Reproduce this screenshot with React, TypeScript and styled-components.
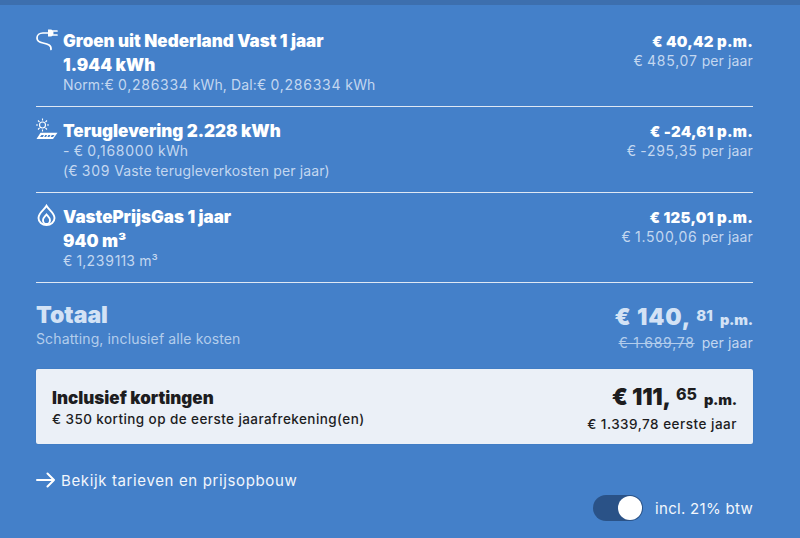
import React from "react";
import styled, { createGlobalStyle } from "styled-components";

const Global = createGlobalStyle`
  html, body { margin: 0; padding: 0; background: #4480c9; }
  body { font-family: Inter, "Liberation Sans", sans-serif; }
`;

const Page = styled.div`
  width: 800px;
  height: 538px;
  box-sizing: border-box;
  overflow: hidden;
  background: #4480c9;
  border-top: 5px solid #3d6fae;
  padding: 25px 47px 0 36px;
  color: #fff;
`;

const Row = styled.section<{ $height: number; $top: number }>`
  height: ${(p) => p.$height}px;
  padding-top: ${(p) => p.$top}px;
  box-sizing: border-box;
  display: flex;
  justify-content: space-between;
  border-bottom: 1px solid #dfe8f4;
`;

const Left = styled.div`
  display: flex;
  gap: 5px;
`;

const IconSlot = styled.div`
  width: 22px;
  flex: none;
  margin-top: -2px;
  svg { display: block; }
`;

const Title = styled.div`
  font-size: 17px;
  line-height: 23px;
  font-weight: 900;
  & + & { margin-top: 1px; }
`;

const Sub = styled.div`
  font-size: 14px;
  line-height: 20px;
  color: #c3d7f0;
  letter-spacing: 0.13px;
  ${Title} + & { margin-top: -2px; }
`;

const Num = styled.span`
  letter-spacing: 0.75px;
`;

const Right = styled.div`
  text-align: right;
`;

const Price = styled.div`
  font-size: 15px;
  line-height: 23px;
  font-weight: 900;
  letter-spacing: 0.25px;
`;

const Yearly = styled(Sub)`
  margin-top: -2px;
`;

const Total = styled.section`
  height: 86px;
  display: flex;
  justify-content: space-between;
  color: #d3e2f5;
  padding-top: 16px;
  box-sizing: border-box;
`;

const TotalTitle = styled.div`
  font-size: 23px;
  line-height: 32px;
  font-weight: 900;
`;

const TotalSub = styled(Sub)`
  margin-top: -2px;
  color: #b3cdec;
`;

const BigPrice = styled.div<{ $dark?: boolean }>`
  display: flex;
  align-items: baseline;
  justify-content: flex-end;
  font-weight: 900;
  font-size: 23px;
  line-height: 32px;
  letter-spacing: ${(p) => (p.$dark ? -0.2 : 0.9)}px;
  margin-top: ${(p) => (p.$dark ? -6 : 2)}px;
  color: ${(p) => (p.$dark ? "#1d1d1f" : "#d3e2f5")};
`;

const Cents = styled.span<{ $dark?: boolean }>`
  font-size: ${(p) => (p.$dark ? 16 : 15)}px;
  font-weight: 800;
  letter-spacing: 0;
  position: relative;
  top: ${(p) => (p.$dark ? -5 : -4)}px;
  margin: 0 7px 0 5px;
`;

const Unit = styled.span`
  font-size: 14.5px;
  font-weight: 900;
  letter-spacing: -0.2px;
`;

const Struck = styled.span`
  text-decoration: line-through;
  color: #b3cdec;
  margin-right: 7px;
`;

const TotalYear = styled(Sub)`
  margin-top: -3px;
`;

const Discount = styled.section`
  height: 75px;
  box-sizing: border-box;
  background: #ebf0f7;
  color: #1d1d1f;
  border-radius: 2px;
  padding: 18px 16px 0;
  display: flex;
  justify-content: space-between;
  box-shadow: 0 0 1px #2f63a5;
`;

const DiscountTitle = styled.div`
  font-size: 17px;
  line-height: 23px;
  font-weight: 900;
`;

const DiscountSub = styled.div`
  font-size: 13.5px;
  line-height: 18px;
  font-weight: 500;
  letter-spacing: 0.42px;
`;

const DiscountYear = styled(DiscountSub)`
  text-align: right;
  margin-top: -1px;
  letter-spacing: 0.5px;
`;

const LinkRow = styled.a`
  display: flex;
  align-items: center;
  gap: 6px;
  margin-top: 25px;
  height: 22px;
  font-size: 15px;
  letter-spacing: 0.63px;
  color: #f2f6fc;
`;

const ToggleRow = styled.div`
  display: flex;
  justify-content: flex-end;
  align-items: center;
  gap: 12px;
  margin-top: 4px;
  font-size: 15px;
  letter-spacing: 0.3px;
  color: #f2f6fc;
`;

const Track = styled.div`
  width: 50px;
  height: 26px;
  border-radius: 13px;
  background: #2a5287;
  display: flex;
  justify-content: flex-end;
  align-items: center;
  padding: 0 1px;
  box-sizing: border-box;
`;

const Knob = styled.div`
  width: 24px;
  height: 24px;
  border-radius: 50%;
  background: #fff;
`;

const Plug = () => (
  <svg width="22" height="24" viewBox="0 0 22 24" fill="none" stroke="#fff" strokeWidth="1.700" strokeLinecap="round">
    <path d="M15 21.500C15.500 17 12 16 7 15C3 14.300 1 13 1 10C1 7 3.500 5 7 5H12" />
    <path d="M12 1.500H14.500C16.500 1.500 17.500 3 17.500 5C17.500 7 16.500 8.500 14.500 8.500H12Z" fill="#fff" stroke="none" />
    <path d="M17 3H21M17 7H21" />
  </svg>
);

const Solar = () => (
  <svg width="22" height="24" viewBox="0 0 22 24" fill="none" stroke="#fff" strokeWidth="1.100">
    <circle cx="6.500" cy="7" r="3" />
    <path d="M6.500 0.500V2.500M6.500 11.500V13.500M0 7H2M11 7H13M2 2.500L3.500 4M9.500 10L11 11.500M11 2.500L9.500 4M3.500 10L2 11.500" />
    <path d="M4.500 14.800H21.500L17 21H0.500Z" fill="#fff" stroke="none" />
    <path d="M5.500 17H18.500L17 19H4Z" fill="#4480c9" stroke="none" />
    <path d="M8.800 16.500L7.300 19.500M12 16.500L10.500 19.500M15.300 16.500L13.800 19.500" stroke="#fff" strokeWidth="1.200" />
  </svg>
);

const Flame = () => (
  <svg width="22" height="24" viewBox="0 0 22 24" fill="none" stroke="#fff" strokeWidth="1.900">
    <path d="M10.500 1.800C12.800 6 18.500 8.800 18.500 14C18.500 18 15 21 10.500 21C6 21 2.500 18 2.500 14C2.500 8.800 8.200 6 10.500 1.800Z" />
    <path d="M10.500 10.500C11.800 12.300 14 13.800 14 16.200C14 18.300 12.500 20 10.500 20C8.500 20 7 18.300 7 16.200C7 13.800 9.200 12.300 10.500 10.500Z" />
  </svg>
);

const Arrow = () => (
  <svg width="19" height="16" viewBox="0 0 19 16" fill="none" stroke="#fff" strokeWidth="2" strokeLinecap="round" strokeLinejoin="round">
    <path d="M1 8H18M11.500 1.500L18 8L11.500 14.500" />
  </svg>
);

export default function App() {
  return (
    <Page>
      <Global />
      <Row $height={77} $top={0}>
        <Left>
          <IconSlot><Plug /></IconSlot>
          <div>
            <Title>Groen uit Nederland Vast 1 jaar</Title>
            <Title>1.944 kWh</Title>
            <Sub>Norm:€ <Num>0,286334</Num> kWh, Dal:€ <Num>0,286334</Num> kWh</Sub>
          </div>
        </Left>
        <Right>
          <Price>€ 40,42 p.m.</Price>
          <Yearly>€ <Num>485,07</Num> per jaar</Yearly>
        </Right>
      </Row>
      <Row $height={86} $top={13}>
        <Left>
          <IconSlot><Solar /></IconSlot>
          <div>
            <Title>Teruglevering 2.228 kWh</Title>
            <Sub>- € <Num>0,168000</Num> kWh</Sub>
            <Sub>(€ <Num>309</Num> Vaste terugleverkosten per jaar)</Sub>
          </div>
        </Left>
        <Right>
          <Price>€ -24,61 p.m.</Price>
          <Yearly>€ -<Num>295,35</Num> per jaar</Yearly>
        </Right>
      </Row>
      <Row $height={90} $top={13}>
        <Left>
          <IconSlot><Flame /></IconSlot>
          <div>
            <Title>VastePrijsGas 1 jaar</Title>
            <Title>940 m³</Title>
            <Sub>€ 1,<Num>239</Num>113 m³</Sub>
          </div>
        </Left>
        <Right>
          <Price>€ 125,01 p.m.</Price>
          <Yearly>€ <Num>1.500,06</Num> per jaar</Yearly>
        </Right>
      </Row>
      <Total>
        <div>
          <TotalTitle>Totaal</TotalTitle>
          <TotalSub>Schatting, inclusief alle kosten</TotalSub>
        </div>
        <Right>
          <BigPrice>€ 140,<Cents>81</Cents><Unit>p.m.</Unit></BigPrice>
          <TotalYear><Struck><Num>€ 1.689,78</Num></Struck>per jaar</TotalYear>
        </Right>
      </Total>
      <Discount>
        <div>
          <DiscountTitle>Inclusief kortingen</DiscountTitle>
          <DiscountSub>€ 350 korting op de eerste jaarafrekening(en)</DiscountSub>
        </div>
        <Right>
          <BigPrice $dark>€ 111,<Cents $dark>65</Cents><Unit>p.m.</Unit></BigPrice>
          <DiscountYear>€ 1.339,78 eerste jaar</DiscountYear>
        </Right>
      </Discount>
      <LinkRow><Arrow />Bekijk tarieven en prijsopbouw</LinkRow>
      <ToggleRow>
        <Track><Knob /></Track>
        incl. 21% btw
      </ToggleRow>
    </Page>
  );
}
